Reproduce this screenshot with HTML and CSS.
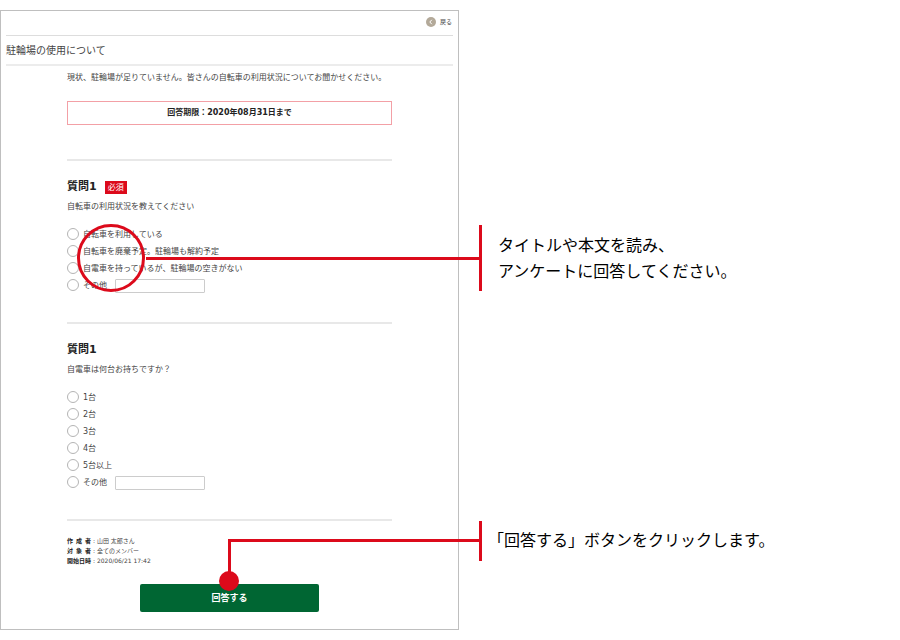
FILE: index.html
```html
<!DOCTYPE html>
<html lang="ja">
<head>
<meta charset="utf-8">
<title>駐輪場の使用について</title>
<link rel="stylesheet" href="styles.css">
</head>
<body>
<main class="guide">
  <form class="panel">
    <header class="topbar">
      <a class="back" href="#">
        <svg class="back-icon" viewBox="0 0 10 10" aria-hidden="true"><circle cx="5" cy="5" r="5" fill="#b3a999"/><path d="M5.8 2.8 3.8 5l2 2.2" fill="none" stroke="#fff" stroke-width="1"/></svg>
        戻る
      </a>
    </header>
    <h1 class="title">駐輪場の使用について</h1>
    <div class="content">
      <p class="intro">現状、駐輪場が足りていません。皆さんの自転車の利用状況についてお聞かせください。</p>
      <p class="deadline">回答期限：2020年08月31日まで</p>

      <fieldset class="question first">
        <legend class="heading">質問1<span class="badge">必須</span></legend>
        <p class="lead">自転車の利用状況を教えてください</p>
        <label class="option"><input class="radio" type="radio" name="q1">自転車を利用している</label>
        <label class="option"><input class="radio" type="radio" name="q1">自転車を廃棄予定。駐輪場も解約予定</label>
        <label class="option"><input class="radio" type="radio" name="q1">自電車を持っているが、駐輪場の空きがない</label>
        <div class="option"><input class="radio" type="radio" name="q1" id="q1-other"><label for="q1-other" id="q1-other-label">その他</label><input class="other" type="text" aria-labelledby="q1-other-label"></div>
      </fieldset>

      <fieldset class="question">
        <legend class="heading">質問1</legend>
        <p class="lead">自電車は何台お持ちですか？</p>
        <label class="option"><input class="radio" type="radio" name="q2">1台</label>
        <label class="option"><input class="radio" type="radio" name="q2">2台</label>
        <label class="option"><input class="radio" type="radio" name="q2">3台</label>
        <label class="option"><input class="radio" type="radio" name="q2">4台</label>
        <label class="option"><input class="radio" type="radio" name="q2">5台以上</label>
        <div class="option"><input class="radio" type="radio" name="q2" id="q2-other"><label for="q2-other" id="q2-other-label">その他</label><input class="other" type="text" aria-labelledby="q2-other-label"></div>
      </fieldset>

      <dl class="meta">
        <div class="meta-row"><dt>作 成 者</dt><dd>: 山田 太郎さん</dd></div>
        <div class="meta-row"><dt>対 象 者</dt><dd>: 全てのメンバー</dd></div>
        <div class="meta-row"><dt>開始日時</dt><dd>: 2020/06/21 17:42</dd></div>
      </dl>
      <button class="submit" type="button">回答する</button>
    </div>
  </form>

  <aside class="notes">
    <p class="note note-answer">タイトルや本文を読み、<br>アンケートに回答してください。<span class="line"></span><span class="ring"></span></p>
    <p class="note note-submit">「回答する」ボタンをクリックします。<span class="elbow"></span><span class="dot"></span></p>
  </aside>
</main>
</body>
</html>
```

FILE: styles.css
```css
* {
  box-sizing: border-box;
}

body {
  margin: 0;
  background: #fff;
  color: #444;
  font-family: "DejaVu Sans", "Noto Sans CJK JP", sans-serif;
  font-size: 8px;
  line-height: 12px;
}

h1, p, dl, dd, fieldset, legend {
  margin: 0;
  padding: 0;
}

.guide {
  display: grid;
  grid-template-columns: 51% 1fr;
  align-items: start;
  padding-top: 10px;
}

.panel {
  border: 1px solid #bfbfbf;
  padding: 0 5px 17px;
}

.topbar {
  display: flex;
  justify-content: flex-end;
  align-items: center;
  height: 25px;
  padding: 0 1px 3px 0;
  border-bottom: 1px solid #ddd;
}

.back {
  display: flex;
  align-items: center;
  gap: 4px;
  color: #444;
  font-size: 6px;
  text-decoration: none;
}

.back-icon {
  width: 10px;
  height: 10px;
}

.title {
  border-bottom: 2px solid #ececec;
  padding-top: 2px;
  font-size: 10px;
  font-weight: 400;
  line-height: 26px;
}

.content {
  padding: 6px 61px 0;
}

.intro {
  white-space: nowrap;
}

.deadline {
  margin: 17px 0 34px;
  border: 1px solid #f3a0a6;
  color: #222;
  font-weight: 700;
  line-height: 22px;
  text-align: center;
}

.question {
  min-width: 0;
  border: 0;
  border-top: 2px solid #e8e8e8;
  padding: 18px 0 28px;
}

.heading {
  float: left;
  width: 100%;
  display: flex;
  align-items: center;
  gap: 8px;
  color: #222;
  font-size: 11px;
  font-weight: 700;
  line-height: 16px;
}

.badge {
  padding: 0 3px;
  background: #dc0a1b;
  color: #fff;
  font-size: 8px;
  font-weight: 400;
  line-height: 13px;
}

.lead {
  clear: both;
  padding: 6px 0 13px;
}

.option {
  display: flex;
  align-items: center;
  height: 17px;
}

.radio {
  appearance: none;
  width: 12px;
  height: 12px;
  margin: 0 4px 1px 0;
  border: 1px solid #b4b4b4;
  border-radius: 50%;
  background: #fff;
}

.other {
  width: 90px;
  height: 14px;
  margin: 0 0 0 8px;
  border: 1px solid #ccc;
  border-radius: 1px;
  padding: 0 3px;
  font: inherit;
}

.meta {
  border-top: 2px solid #e8e8e8;
  padding-top: 15px;
  font-size: 6px;
  line-height: 10px;
}

.meta-row {
  display: flex;
  gap: 2px;
}

.meta dt {
  width: 24px;
  color: #222;
  font-weight: 700;
  text-align-last: justify;
  white-space: nowrap;
}

.submit {
  display: block;
  width: 55%;
  height: 28px;
  margin: 18px auto 0;
  border: 0;
  border-radius: 2px;
  padding: 0 0 2px;
  background: #006633;
  color: #fff;
  font-family: inherit;
  font-size: 9px;
  font-weight: 700;
}

.notes {
  padding: 215px 0 0 20px;
  color: #000;
  font-family: "Noto Sans CJK JP", sans-serif;
  font-size: 16px;
  line-height: 26px;
}

.note {
  position: relative;
  border-left: 3px solid #dc0a1b;
}

.note-answer {
  padding: 6px 0 8px 16px;
}

.note-submit {
  margin-top: 230px;
  padding: 5px 0 9px 6px;
}

/* Leader lines drawn over the survey panel */
.line,
.elbow,
.ring,
.dot {
  position: absolute;
}

.line {
  top: 32px;
  right: 100%;
  width: 336px;
  height: 3px;
  background: #dc0a1b;
}

.ring {
  top: -1px;
  left: -405px;
  width: 68px;
  height: 68px;
  border: 3px solid #dc0a1b;
  border-radius: 50%;
}

.elbow {
  top: 18px;
  right: 100%;
  width: 254px;
  height: 42px;
  border: solid #dc0a1b;
  border-width: 3px 0 0 3px;
}

.dot {
  top: 50px;
  left: -263px;
  width: 20px;
  height: 20px;
  border-radius: 50%;
  background: #dc0a1b;
}
```
